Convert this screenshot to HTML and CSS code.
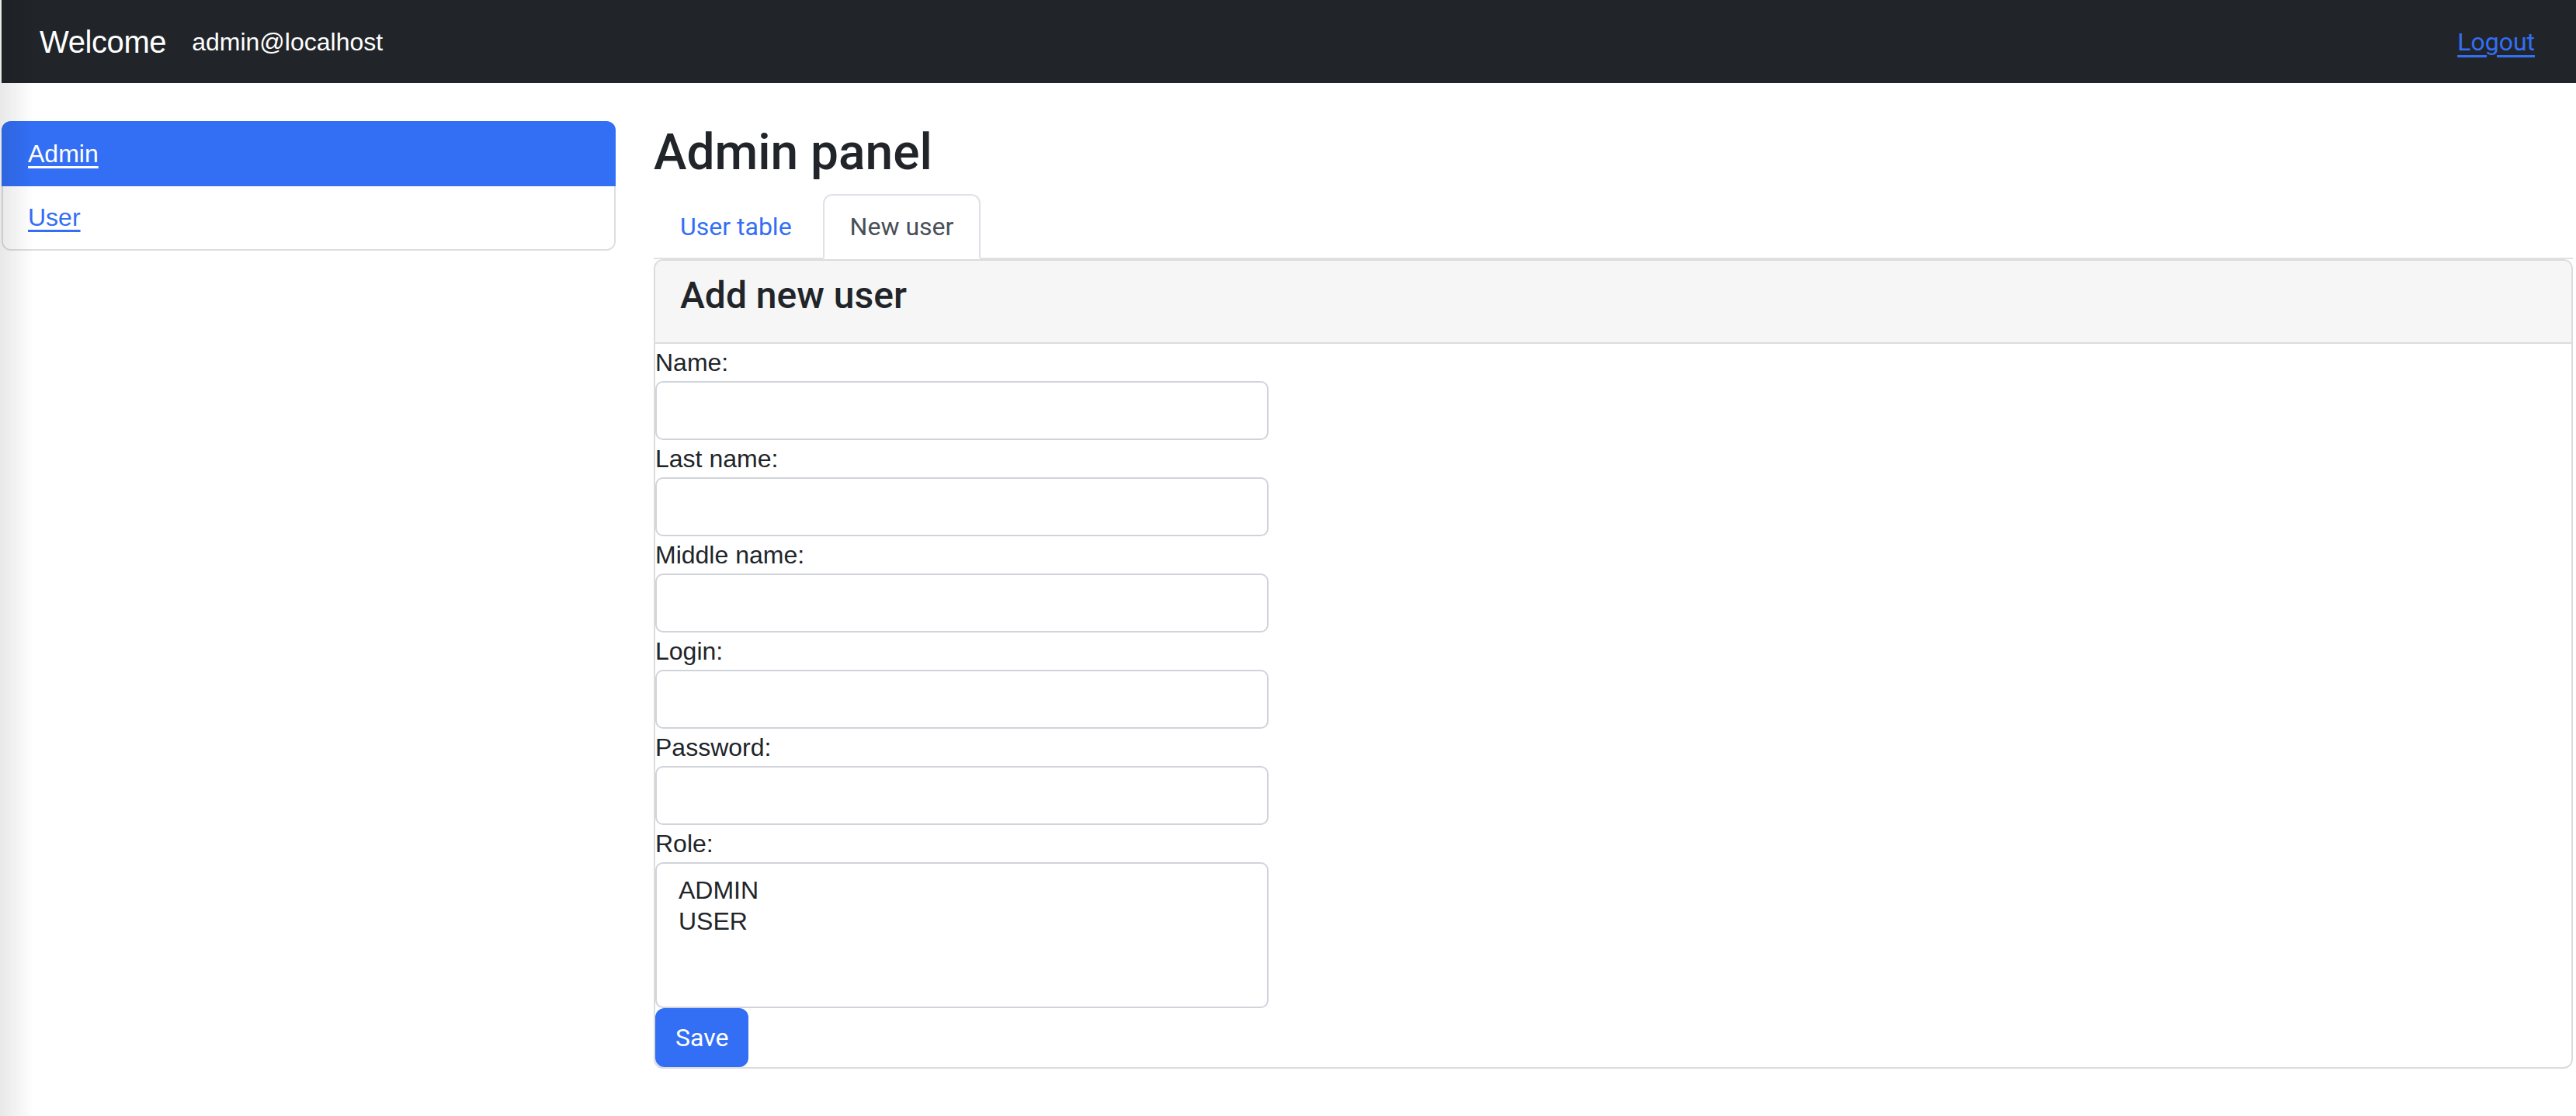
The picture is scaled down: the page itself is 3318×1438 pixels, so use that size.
FILE: index.html
```html
<!DOCTYPE html>
<html lang="en">
<head>
<meta charset="utf-8">
<title>Admin panel</title>
<link rel="stylesheet" href="styles.css">
</head>
<body>
<nav class="topbar">
  <span class="brand">Welcome</span>
  <span class="user-email">admin@localhost</span>
  <a class="logout" href="#">Logout</a>
</nav>
<div class="layout">
  <aside class="side-list">
    <a class="side-item active" href="#">Admin</a>
    <a class="side-item" href="#">User</a>
  </aside>
  <main class="content">
    <h2 class="page-title">Admin panel</h2>
    <ul class="tabs">
      <li><a class="tab" href="#">User table</a></li>
      <li><a class="tab active" href="#">New user</a></li>
    </ul>
    <section class="card">
      <div class="card-header"><h4 class="card-title">Add new user</h4></div>
      <form class="user-form">
        <label class="field-label" for="name">Name:</label>
        <input class="field-input" id="name" type="text">
        <label class="field-label" for="lastname">Last name:</label>
        <input class="field-input" id="lastname" type="text">
        <label class="field-label" for="middlename">Middle name:</label>
        <input class="field-input" id="middlename" type="text">
        <label class="field-label" for="login">Login:</label>
        <input class="field-input" id="login" type="text">
        <label class="field-label" for="password">Password:</label>
        <input class="field-input" id="password" type="password">
        <label class="field-label" for="role">Role:</label>
        <select class="field-select" id="role" multiple>
          <option>ADMIN</option>
          <option>USER</option>
        </select>
        <button class="btn-save" type="button">Save</button>
      </form>
    </section>
  </main>
</div>
</body>
</html>
```
FILE: styles.css
```css
* { box-sizing: border-box; }

html, body { margin: 0; padding: 0; }

body {
  background: #fff;
  color: #212529;
  font-family: "Liberation Sans", Arial, sans-serif;
  font-size: 32px;
  line-height: 1.5;
  min-height: 1438px;
  position: relative;
}

body::before {
  content: "";
  position: fixed;
  left: 0;
  top: 0;
  bottom: 0;
  width: 44px;
  background: linear-gradient(to right, rgba(0,0,0,0.09), rgba(0,0,0,0));
  pointer-events: none;
  z-index: 10;
}

.topbar {
  display: flex;
  align-items: center;
  height: 107px;
  margin-left: 2px;
  padding: 0 53px 0 49px;
  background: #212529;
  color: #fff;
}

.brand {
  font-size: 40px;
  line-height: 60px;
  margin-right: 33px;
  letter-spacing: -0.4px;
}

.user-email {
  font-size: 32px;
  line-height: 48px;
}

.logout {
  margin-left: auto;
  font-family: Roboto, "Liberation Sans", sans-serif;
  font-size: 32px;
  color: #336ff5;
  text-decoration: underline;
  text-decoration-thickness: 3px;
  text-underline-offset: 6px;
}

.layout {
  display: grid;
  grid-template-columns: 791px 1fr;
  column-gap: 49px;
  padding: 49px 4px 0 2px;
}

.side-list {
  display: flex;
  flex-direction: column;
  align-self: start;
  border: 2px solid #dedede;
  border-radius: 12px;
}

.side-item {
  display: block;
  padding: 16px 32px 17px;
  font-size: 32px;
  line-height: 48px;
  color: #336ff5;
  text-decoration: underline;
  text-decoration-thickness: 3px;
  text-underline-offset: 5px;
  background: #fff;
  border-radius: 0 0 10px 10px;
}

.side-item.active {
  margin: -2px -2px 0;
  padding: 18px 34px 18px;
  background: #336ff5;
  color: #fff;
  border-radius: 12px 12px 0 0;
}

.content {
  min-width: 0;
}

.page-title {
  margin: 3px 0 14px;
  font-family: Roboto, "Liberation Sans", sans-serif;
  font-size: 64px;
  font-weight: 500;
  line-height: 1.2;
  color: #212529;
}

.tabs {
  display: flex;
  margin: 0;
  padding: 0;
  list-style: none;
  border-bottom: 2px solid #dee2e6;
}

.tab {
  display: block;
  margin-bottom: -2px;
  padding: 16px 32px;
  font-family: Roboto, "Liberation Sans", sans-serif;
  font-size: 32px;
  line-height: 48px;
  color: #336ff5;
  text-decoration: none;
  border: 2px solid transparent;
  border-radius: 12px 12px 0 0;
}

.tab.active {
  margin-left: 6px;
  padding: 16px 33px;
  color: #495057;
  background: #fff;
  border-color: #dee2e6 #dee2e6 #fff;
}

.card {
  border: 2px solid #dcdcdc;
  border-radius: 12px;
  background: #fff;
}

.card-header {
  padding: 16px 32px;
  background: #f6f6f6;
  border-bottom: 2px solid #dcdcdc;
  border-radius: 10px 10px 0 0;
}

.card-title {
  margin: 0 0 16px;
  font-family: Roboto, "Liberation Sans", sans-serif;
  font-size: 48px;
  font-weight: 500;
  line-height: 1.2;
  color: #212529;
}

.user-form {
  display: flex;
  flex-direction: column;
  align-items: flex-start;
}

.field-label {
  display: block;
  font-size: 32px;
  line-height: 48px;
  color: #212529;
}

.field-input {
  display: block;
  width: 790px;
  height: 76px;
  padding: 12px 24px;
  border: 2px solid #d0d4da;
  border-radius: 10px;
  background: #fff;
  font-family: "Liberation Sans", Arial, sans-serif;
  font-size: 32px;
  color: #212529;
  outline: none;
}

.field-select {
  display: block;
  width: 790px;
  height: 188px;
  padding: 16px 24px 12px;
  border: 2px solid #d0d4da;
  border-radius: 10px;
  background: #fff;
  font-family: "Liberation Sans", Arial, sans-serif;
  font-size: 32px;
  color: #212529;
  outline: none;
  overflow: hidden;
}

.field-select option {
  padding: 0 4px;
  line-height: 40px;
  min-height: 40px;
  color: #212529;
}

.btn-save {
  display: inline-block;
  padding: 12px 24px;
  border: 2px solid #336ff5;
  border-radius: 12px;
  background: #336ff5;
  color: #fff;
  font-family: Roboto, "Liberation Sans", sans-serif;
  font-size: 32px;
  line-height: 48px;
  cursor: pointer;
}
```
